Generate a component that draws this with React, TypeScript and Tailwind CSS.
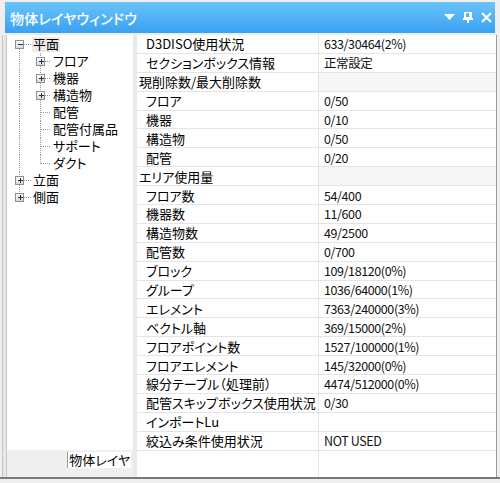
import React from 'react';

type Row = { l: string; v?: string; cat?: boolean };

const rows: Row[] = [
  { l: 'D3DISO使用状況', v: '633/30464(2%)' },
  { l: 'セクションボックス情報', v: '正常設定' },
  { l: '現削除数/最大削除数', cat: true },
  { l: 'フロア', v: '0/50' },
  { l: '機器', v: '0/10' },
  { l: '構造物', v: '0/50' },
  { l: '配管', v: '0/20' },
  { l: 'エリア使用量', cat: true },
  { l: 'フロア数', v: '54/400' },
  { l: '機器数', v: '11/600' },
  { l: '構造物数', v: '49/2500' },
  { l: '配管数', v: '0/700' },
  { l: 'ブロック', v: '109/18120(0%)' },
  { l: 'グループ', v: '1036/64000(1%)' },
  { l: 'エレメント', v: '7363/240000(3%)' },
  { l: 'ベクトル軸', v: '369/15000(2%)' },
  { l: 'フロアポイント数', v: '1527/100000(1%)' },
  { l: 'フロアエレメント', v: '145/32000(0%)' },
  { l: '線分テーブル（処理前）', v: '4474/512000(0%)' },
  { l: '配管スキップボックス使用状況', v: '0/30' },
  { l: 'インポートLu', v: '' },
  { l: '絞込み条件使用状況', v: 'NOT USED' },
];

type T = { t: string; lvl: 0 | 1; kind: 'minus' | 'plus' | 'leaf'; top?: boolean; last?: boolean; sel?: boolean };

const tree: T[] = [
  { t: '平面', lvl: 0, kind: 'minus', top: true, sel: true },
  { t: 'フロア', lvl: 1, kind: 'plus' },
  { t: '機器', lvl: 1, kind: 'plus' },
  { t: '構造物', lvl: 1, kind: 'plus' },
  { t: '配管', lvl: 1, kind: 'leaf' },
  { t: '配管付属品', lvl: 1, kind: 'leaf' },
  { t: 'サポート', lvl: 1, kind: 'leaf' },
  { t: 'ダクト', lvl: 1, kind: 'leaf', last: true },
  { t: '立面', lvl: 0, kind: 'plus' },
  { t: '側面', lvl: 0, kind: 'plus', last: true },
];

const DOT = { stroke: '#9a9a9a', strokeWidth: 1, strokeDasharray: '1 1' };

function Box({ cx, minus }: { cx: number; minus: boolean }) {
  return (
    <g>
      <rect x={cx - 4} y={4.5} width={8} height={8} fill="url(#bx)" stroke="#8e8f8f" />
      <line x1={cx - 2} y1={8.5} x2={cx + 3} y2={8.5} stroke="#1f2d5a" />
      {!minus && <line x1={cx + 0.5} y1={6} x2={cx + 0.5} y2={11} stroke="#1f2d5a" />}
    </g>
  );
}

function Conn({ n }: { n: T }) {
  const H = 17;
  if (n.lvl === 0) {
    const cx = 12.5;
    return (
      <svg width={25} height={H} className="shrink-0" shapeRendering="crispEdges">
        {!n.top && <line x1={cx} y1={0} x2={cx} y2={4} {...DOT} />}
        {!n.last && <line x1={cx} y1={13} x2={cx} y2={H} {...DOT} />}
        <line x1={17} y1={8.5} x2={24} y2={8.5} {...DOT} />
        <Box cx={cx} minus={n.kind === 'minus'} />
      </svg>
    );
  }
  const c0 = 12.5;
  const c1 = 33.5;
  return (
    <svg width={45} height={H} className="shrink-0" shapeRendering="crispEdges">
      <line x1={c0} y1={0} x2={c0} y2={H} {...DOT} />
      {n.kind === 'leaf' ? (
        <>
          <line x1={c1} y1={0} x2={c1} y2={n.last ? 9 : H} {...DOT} />
          <line x1={c1} y1={8.5} x2={44} y2={8.5} {...DOT} />
        </>
      ) : (
        <>
          <line x1={c1} y1={0} x2={c1} y2={4} {...DOT} />
          <line x1={c1} y1={13} x2={c1} y2={H} {...DOT} />
          <line x1={38} y1={8.5} x2={44} y2={8.5} {...DOT} />
          <Box cx={c1} minus={false} />
        </>
      )}
    </svg>
  );
}

export default function App() {
  return (
    <div className="w-[500px] h-[483px] bg-[#efefef] flex flex-col font-['Noto_Sans_CJK_JP',sans-serif] text-black overflow-hidden">
      <svg width="0" height="0" className="absolute">
        <defs>
          <linearGradient id="bx" x1="0" y1="0" x2="0" y2="1">
            <stop offset="0" stopColor="#ffffff" />
            <stop offset="1" stopColor="#d6d6d6" />
          </linearGradient>
        </defs>
      </svg>
      {/* title bar */}
      <div className="mt-[2px] ml-[5px] mr-[5px] h-[31px] flex items-center bg-gradient-to-b from-[#68c4fb] to-[#3aa0f0] text-white">
        <div className="pl-[5px] text-[14px] font-medium tracking-[0.2px] [font-feature-settings:'palt'] leading-[16px]">物体レイヤウィンドウ</div>
        <div className="ml-auto flex items-center gap-[8px] pr-[3px]">
          <svg width="11" height="7" viewBox="0 0 11 7"><polygon points="0,0 11,0 5.5,6" fill="#fff" /></svg>
          <svg width="10" height="11" viewBox="0 0 10 11" shapeRendering="crispEdges">
            <rect x="2" y="0" width="6" height="6" fill="none" stroke="#fff" strokeWidth="1.5" />
            <rect x="6" y="0" width="2" height="6" fill="#fff" />
            <rect x="0" y="6" width="10" height="2" fill="#fff" />
            <rect x="4" y="8" width="2" height="3" fill="#fff" />
          </svg>
          <svg width="11" height="11" viewBox="0 0 11 11">
            <path d="M1 1 L10 10 M10 1 L1 10" stroke="#fff" strokeWidth="2.2" />
          </svg>
        </div>
      </div>
      {/* body */}
      <div className="mt-[2px] h-[444px] flex border-b-2 border-[#7a7a7a]">
        <div className="w-[2px]" />
        <div className="w-px bg-[#c4c4c4]" />
        <div className="w-[3px] bg-[#e8e8e8]" />
        <div className="w-[127px] flex flex-col border-l border-[#c8c8c8]">
          <div className="flex-1 bg-white pt-px font-['Liberation_Sans','Noto_Sans_CJK_JP',sans-serif]">
            {tree.map((n, i) => (
              <div key={i} className="h-[17px] flex items-center">
                <Conn n={n} />
                <span
                  className={`block text-[13px] leading-[15px] h-[15px] px-px [font-feature-settings:'palt'] ${n.sel ? 'bg-[#ebebeb]' : ''}`}
                >
                  {n.t}
                </span>
              </div>
            ))}
          </div>
          <div className="h-[27px] bg-[#efefef] flex justify-end items-start pr-[2px] pt-[2px]">
            <div className="bg-white border-l border-[#9a9a9a] text-[13px] leading-[16px] h-[16px] px-px [font-feature-settings:'palt']">物体レイヤ</div>
          </div>
        </div>
        <div className="w-[4px] bg-[#e9e9e9]" />
        <div className="w-[360px] bg-white flex flex-col border-r border-[#9a9a9a]">
          {rows.map((r, i) => (
            <div key={i} className="h-[18.9px] flex border-b border-[#e4e4e4]">
              <div
                className={`w-[181px] flex items-center text-[13px] leading-[15px] whitespace-nowrap overflow-hidden [font-feature-settings:'palt'] ${r.cat ? 'pl-[2px]' : 'pl-[9px]'}`}
              >
                {r.l}
              </div>
              <div
                className={`flex-1 flex items-center pl-[5px] border-l border-[#e4e4e4] text-[12.5px] tracking-[-0.4px] leading-[15px] text-[#111] whitespace-nowrap ${r.cat ? 'bg-[#f6f6f6]' : ''}`}
              >
                {r.v}
              </div>
            </div>
          ))}
          <div className="flex-1 flex">
            <div className="w-[181px]" />
            <div className="flex-1 border-l border-[#e4e4e4]" />
          </div>
        </div>
        <div className="w-[2px]" />
      </div>
    </div>
  );
}
